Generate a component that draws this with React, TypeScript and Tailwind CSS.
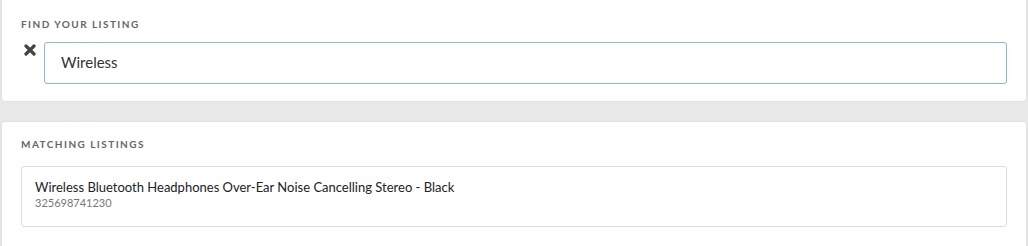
export default function App() {
  return (
    <div className="flex h-[246px] w-[1028px] flex-col gap-[19px] bg-[#e8e8e9] px-px font-['Lato','Noto_Sans',sans-serif]">
      <section className="flex h-[102px] flex-col rounded-b-[4px] border-x border-b border-[#e2e2e2] bg-white px-[19px] pt-[18px]">
        <h2 className="text-[10px] font-bold uppercase leading-[12px] tracking-[1.45px] text-[#666]">
          Find your listing
        </h2>
        <div className="mt-[12px] flex items-start gap-2">
          <button className="mt-[2px] flex h-[12px] w-[15px] items-center justify-center pl-[2px] text-[#444]">
            <svg viewBox="0 0 12 12" className="h-[12px] w-[12px]" fill="none" stroke="currentColor">
              <path d="M2 2 10 10M10 2 2 10" strokeWidth="3.2" strokeLinecap="round" />
            </svg>
          </button>
          <input
            defaultValue="Wireless"
            className="h-[42px] flex-1 rounded-[3px] border border-[#8fb8cb] bg-white px-4 pb-[2px] text-[15px] text-[#333] outline-none"
          />
        </div>
      </section>
      <section className="flex flex-1 flex-col rounded-t-[4px] border-x border-t border-[#e2e2e2] bg-white px-[19px] pt-[16px]">
        <h2 className="text-[10px] font-bold uppercase leading-[12px] tracking-[1.45px] text-[#666]">
          Matching listings
        </h2>
        <div className="mt-[16px] flex h-[61px] flex-col rounded-[3px] border border-[#dddddd] px-[13px] pt-[12px]">
          <div className="text-[13px] leading-[17px] text-[#222]">
            Wireless Bluetooth Headphones Over-Ear Noise Cancelling Stereo - Black
          </div>
          <div className="text-[11px] leading-[14px] text-[#777]">325698741230</div>
        </div>
      </section>
    </div>
  );
}
